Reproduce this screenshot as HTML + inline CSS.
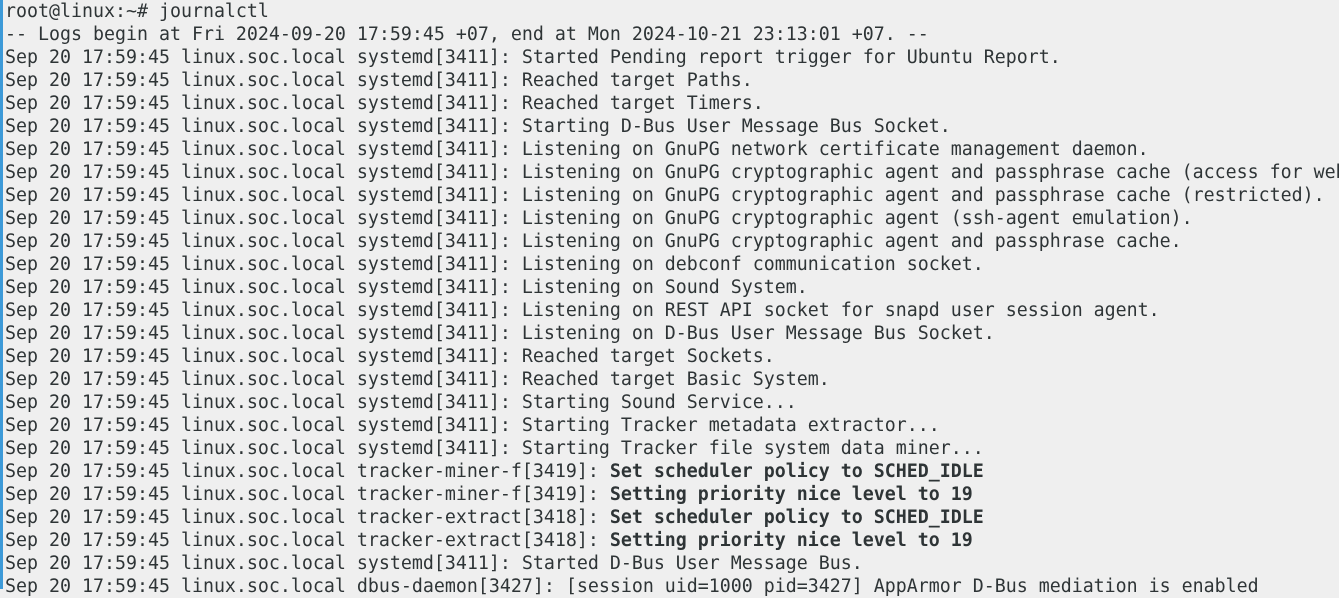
<!DOCTYPE html>
<html><head><meta charset="utf-8"><style>
html,body{margin:0;padding:0;background:#efefef;width:1339px;height:589px;overflow:hidden}
.bar{position:absolute;left:0;top:0;width:3px;height:589px;background:#3d9ad8}
pre{margin:0;position:absolute;left:5px;top:0px;font-family:"DejaVu Sans Mono","Liberation Mono",monospace;font-size:18.27px;line-height:23px;color:#2e3436;white-space:pre}
b{font-weight:bold}
</style></head><body><div class="bar"></div><pre>root@linux:~# journalctl
-- Logs begin at Fri 2024-09-20 17:59:45 +07, end at Mon 2024-10-21 23:13:01 +07. --
Sep 20 17:59:45 linux.soc.local systemd[3411]: Started Pending report trigger for Ubuntu Report.
Sep 20 17:59:45 linux.soc.local systemd[3411]: Reached target Paths.
Sep 20 17:59:45 linux.soc.local systemd[3411]: Reached target Timers.
Sep 20 17:59:45 linux.soc.local systemd[3411]: Starting D-Bus User Message Bus Socket.
Sep 20 17:59:45 linux.soc.local systemd[3411]: Listening on GnuPG network certificate management daemon.
Sep 20 17:59:45 linux.soc.local systemd[3411]: Listening on GnuPG cryptographic agent and passphrase cache (access for web
Sep 20 17:59:45 linux.soc.local systemd[3411]: Listening on GnuPG cryptographic agent and passphrase cache (restricted).
Sep 20 17:59:45 linux.soc.local systemd[3411]: Listening on GnuPG cryptographic agent (ssh-agent emulation).
Sep 20 17:59:45 linux.soc.local systemd[3411]: Listening on GnuPG cryptographic agent and passphrase cache.
Sep 20 17:59:45 linux.soc.local systemd[3411]: Listening on debconf communication socket.
Sep 20 17:59:45 linux.soc.local systemd[3411]: Listening on Sound System.
Sep 20 17:59:45 linux.soc.local systemd[3411]: Listening on REST API socket for snapd user session agent.
Sep 20 17:59:45 linux.soc.local systemd[3411]: Listening on D-Bus User Message Bus Socket.
Sep 20 17:59:45 linux.soc.local systemd[3411]: Reached target Sockets.
Sep 20 17:59:45 linux.soc.local systemd[3411]: Reached target Basic System.
Sep 20 17:59:45 linux.soc.local systemd[3411]: Starting Sound Service...
Sep 20 17:59:45 linux.soc.local systemd[3411]: Starting Tracker metadata extractor...
Sep 20 17:59:45 linux.soc.local systemd[3411]: Starting Tracker file system data miner...
Sep 20 17:59:45 linux.soc.local tracker-miner-f[3419]: <b>Set scheduler policy to SCHED_IDLE</b>
Sep 20 17:59:45 linux.soc.local tracker-miner-f[3419]: <b>Setting priority nice level to 19</b>
Sep 20 17:59:45 linux.soc.local tracker-extract[3418]: <b>Set scheduler policy to SCHED_IDLE</b>
Sep 20 17:59:45 linux.soc.local tracker-extract[3418]: <b>Setting priority nice level to 19</b>
Sep 20 17:59:45 linux.soc.local systemd[3411]: Started D-Bus User Message Bus.
Sep 20 17:59:45 linux.soc.local dbus-daemon[3427]: [session uid=1000 pid=3427] AppArmor D-Bus mediation is enabled
</pre></body></html>
